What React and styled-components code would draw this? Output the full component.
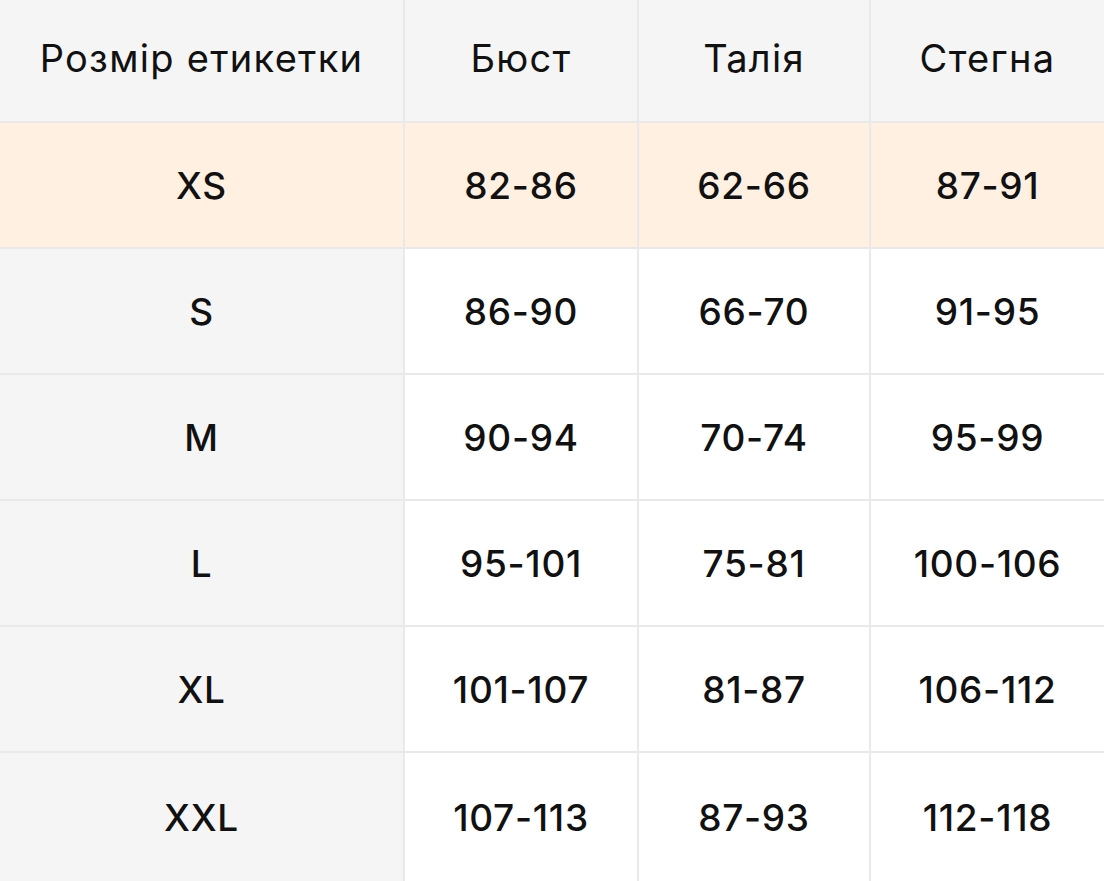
import styled, { createGlobalStyle } from 'styled-components';

const GlobalStyle = createGlobalStyle`
  html, body {
    margin: 0;
    padding: 0;
    background: #ffffff;
  }
  body {
    font-family: Inter, "Noto Sans", "Liberation Sans", sans-serif;
    color: #111111;
  }
`;

const Table = styled.div`
  display: grid;
  grid-template-columns: 403px 232px 230px 233px;
  grid-template-rows: 121px repeat(5, 124px) 128px;
  gap: 2px;
  width: 1104px;
  height: 881px;
  background: #e9e9e9;
`;

const Cell = styled.div`
  display: flex;
  align-items: center;
  justify-content: center;
  font-size: ${({ $head }) => ($head ? '38px' : '37px')};
  font-weight: ${({ $head }) => ($head ? 400 : 500)};
  letter-spacing: ${({ $head }) => ($head ? '1.3px' : '0.7px')};
  padding-bottom: ${({ $head }) => ($head ? '6px' : '0')};
  background: ${({ $tone }) => {
    if ($tone === 'peach') return '#fff0e2';
    if ($tone === 'grey') return '#f5f5f5';
    return '#ffffff';
  }};
`;

const header = ['Розмір етикетки', 'Бюст', 'Талія', 'Стегна'];

const rows = [
  ['XS', '82-86', '62-66', '87-91'],
  ['S', '86-90', '66-70', '91-95'],
  ['M', '90-94', '70-74', '95-99'],
  ['L', '95-101', '75-81', '100-106'],
  ['XL', '101-107', '81-87', '106-112'],
  ['XXL', '107-113', '87-93', '112-118'],
];

export default function App() {
  return (
    <>
      <GlobalStyle />
      <Table>
        {header.map((h) => (
          <Cell key={h} $head $tone="grey">{h}</Cell>
        ))}
        {rows.map((row, i) => row.map((value, j) => {
          let tone = 'white';
          if (i === 0) tone = 'peach';
          else if (j === 0) tone = 'grey';
          return <Cell key={`${row[0]}-${j}`} $tone={tone}>{value}</Cell>;
        }))}
      </Table>
    </>
  );
}
